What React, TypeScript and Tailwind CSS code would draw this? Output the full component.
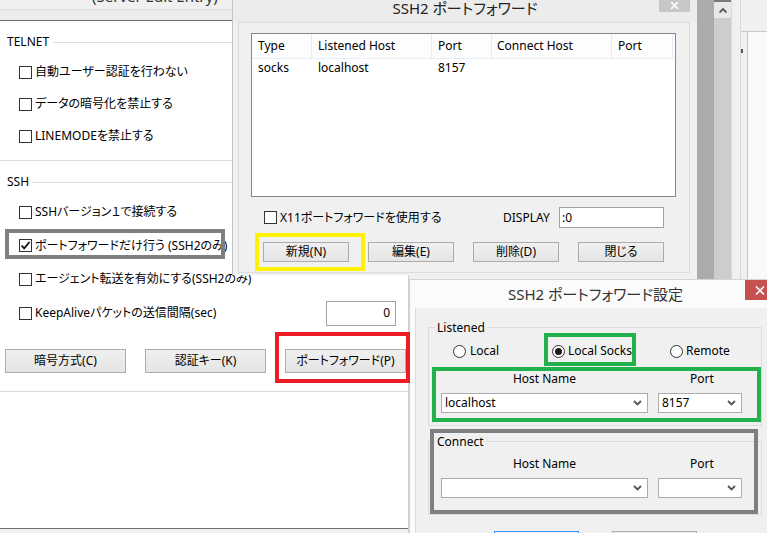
import React from 'react';

const FONT = "[font-family:'Noto_Sans','Noto_Sans_CJK_JP',sans-serif] [font-feature-settings:'palt']";

function CheckBox({ checked = false }: { checked?: boolean }) {
  return (
    <span className="w-[13px] h-[13px] shrink-0 border border-[#333] bg-white flex items-center justify-center">
      {checked && (
        <svg width="11" height="11" viewBox="0 0 11 11">
          <path d="M1.5 5.5 L4.2 8.3 L9.5 2" fill="none" stroke="#111" strokeWidth="1.8" />
        </svg>
      )}
    </span>
  );
}

function Radio({ on = false }: { on?: boolean }) {
  return (
    <span className="w-[13px] h-[13px] shrink-0 rounded-full border border-[#333] bg-white flex items-center justify-center">
      {on && <span className="w-[7px] h-[7px] rounded-full bg-[#1a1a1a]" />}
    </span>
  );
}

function Btn({ label, w, h, blue = false }: { label: string; w: string; h: string; blue?: boolean }) {
  return (
    <div
      className={`${w} ${h} shrink-0 flex items-center justify-center border ${blue ? 'border-[#3399ff]' : 'border-[#acacac]'} bg-[linear-gradient(#f0f0f0,#e5e5e5)]`}
    >
      {label}
    </div>
  );
}

function Combo({ w, value = '' }: { w: string; value?: string }) {
  return (
    <div className={`${w} h-[20px] shrink-0 bg-white border border-[#acacac] flex items-center justify-between pl-[3px] pr-[5px]`}>
      <span>{value}</span>
      <svg width="9" height="6" viewBox="0 0 9 6">
        <path d="M1 1 L4.5 4.5 L8 1" fill="none" stroke="#555" strokeWidth="1.8" />
      </svg>
    </div>
  );
}

function CheckRow({ label, h, checked = false, children }: { label: string; h: string; checked?: boolean; children?: React.ReactNode }) {
  return (
    <div className={`${h} flex items-center pl-[19px]`}>
      <CheckBox checked={checked} />
      <span className="ml-[3px] whitespace-nowrap">{label}</span>
      {children}
    </div>
  );
}

export default function App() {
  return (
    <div className={`relative w-[767px] h-[533px] overflow-hidden bg-[#f0f0f0] text-[12px] leading-none text-black ${FONT}`}>
      {/* background: SSH setup window */}
      <div className="absolute left-0 top-0 w-[409px] h-[533px] flex flex-col bg-white border-r border-[#d0d0d0]">
        <div className="relative h-[21px] shrink-0 bg-[#ececec] border-b border-[#6d6d6d] overflow-hidden">
          <div className="h-[10px] bg-[#f0f0f0] border-b border-[#dcdcdc]" />
          <span className="absolute left-[92px] top-[-14px] text-[15px] leading-[20px] text-[#333] whitespace-nowrap">(Server Edit Entry)</span>
        </div>

        <div className="mt-[13px] h-[16px] flex items-center">
          <span className="pl-[7px] pr-[4px]">TELNET</span>
          <div className="flex-1 h-px bg-[#dcdcdc]" />
        </div>
        <div className="mt-[6px]">
          <CheckRow h="h-[32px]" label="自動ユーザー認証を行わない" />
          <CheckRow h="h-[32px]" label="データの暗号化を禁止する" />
          <CheckRow h="h-[32px]" label="LINEMODEを禁止する" />
        </div>
        <div className="mt-[8px] h-px bg-[#dcdcdc]" />

        <div className="mt-[13px] h-[16px] flex items-center">
          <span className="pl-[7px] pr-[3px]">SSH</span>
          <div className="flex-1 h-px bg-[#dcdcdc]" />
        </div>
        <div className="mt-[5px]">
          <CheckRow h="h-[34px]" label="SSHバージョン１で接続する" />
          <CheckRow h="h-[33px]" checked label="ポートフォワードだけ行う (SSH2のみ)" />
          <CheckRow h="h-[34px]" label="エージェント転送を有効にする(SSH2のみ)" />
          <CheckRow h="h-[34px]" label="KeepAliveパケットの送信間隔(sec)">
            <div className="ml-auto mr-[12px] w-[70px] h-[25px] border border-[#a0a0a0] bg-white flex items-center justify-end pr-[5px]">0</div>
          </CheckRow>
        </div>

        <div className="mt-[19px] flex gap-[19px] pl-[5px]">
          <Btn w="w-[121px]" h="h-[24px]" label="暗号方式(C)" />
          <Btn w="w-[121px]" h="h-[24px]" label="認証キー(K)" />
          <Btn w="w-[121px]" h="h-[24px]" label="ポートフォワード(P)" />
        </div>
        <div className="mt-[18px] h-px bg-[#d9d9d9]" />
        <div className="flex-1" />
        <div className="h-[5px] border-t border-[#6d6d6d] bg-[#f0f0f0]" />
      </div>

      {/* SSH2 port forward window */}
      <div className="absolute left-[232px] top-0 w-[465px] h-[275px] flex flex-col bg-[#f0f0f0] border-l border-[#c4c4c4]">
        <div className="relative h-[22px] shrink-0 bg-[#ececec] flex items-center justify-center">
          <span className="text-[15px] text-[#222] -mt-[6px]">SSH2 ポートフォワード</span>
          <div className="absolute right-[7px] top-0 w-[31px] h-[12px] bg-[#c7c7c7] flex items-center justify-center">
            <svg width="9" height="8" viewBox="0 0 9 8">
              <path d="M1 0 L8 7 M8 0 L1 7" stroke="#fff" strokeWidth="1.6" />
            </svg>
          </div>
        </div>
        <div className="ml-[5px] mr-[7px] h-[251px] border border-[#dcdcdc] bg-[#f0f0f0]">
          <div className="ml-[12px] mt-[10px] w-[425px] h-[164px] border border-[#828790] bg-white">
            <div className="h-[25px] flex border-b border-[#e5eefa] bg-[#fdfdfd]">
              <div className="w-[60px] border-r border-[#e3ecf8] flex items-center pl-[6px]">Type</div>
              <div className="w-[120px] border-r border-[#e3ecf8] flex items-center pl-[6px]">Listened Host</div>
              <div className="w-[60px] border-r border-[#e3ecf8] flex items-center pl-[6px]">Port</div>
              <div className="w-[120px] border-r border-[#e3ecf8] flex items-center pl-[5px]">Connect Host</div>
              <div className="w-[61px] border-r border-[#e3ecf8] flex items-center pl-[6px]">Port</div>
            </div>
            <div className="h-[17px] flex">
              <div className="w-[60px] flex items-center pl-[6px]">socks</div>
              <div className="w-[120px] flex items-center pl-[6px]">localhost</div>
              <div className="w-[60px] flex items-center pl-[6px]">8157</div>
            </div>
          </div>
          <div className="mt-[10px] h-[21px] flex items-center pl-[25px]">
            <div className="w-[239px] flex items-center">
              <CheckBox />
              <span className="ml-[3px] whitespace-nowrap">X11ポートフォワードを使用する</span>
            </div>
            <span className="w-[56px]">DISPLAY</span>
            <div className="w-[105px] h-[21px] border border-[#a0a0a0] bg-white flex items-center pl-[2px]">:0</div>
          </div>
          <div className="mt-[14px] flex gap-[19px] pl-[24px]">
            <Btn w="w-[86px]" h="h-[20px]" label="新規(N)" />
            <Btn w="w-[86px]" h="h-[20px]" label="編集(E)" />
            <Btn w="w-[86px]" h="h-[20px]" label="削除(D)" />
            <Btn w="w-[86px]" h="h-[20px]" label="閉じる" />
          </div>
        </div>
      </div>

      {/* right-hand strip of other windows */}
      <div className="absolute left-[697px] top-0 w-[70px] h-[279px] flex">
        <div className="w-[17px] bg-[#ababab]" />
        <div className="w-[17px] flex flex-col bg-[#cdcdcd]">
          <div className="h-[18px] bg-[#e8e8e8] border-t-2 border-[#7a7a7a] flex items-center justify-center">
            <svg width="8" height="5" viewBox="0 0 8 5">
              <path d="M0.5 4.5 L4 1 L7.5 4.5" fill="none" stroke="#555" strokeWidth="1.8" />
            </svg>
          </div>
        </div>
        <div className="w-[10px] bg-[#f0f0f0] border-x border-[#d9d9d9]" />
        <div className="w-[26px] flex flex-col bg-[#f0f0f0]">
          <div className="h-[32px] border-b border-[#c8c8c8]" />
          <div className="flex-1 flex">
            <div className="w-[6px] relative">
              <div className="absolute left-0 top-[17px] w-[2px] h-[4px] bg-[#555]" />
            </div>
            <div className="flex-1 border-l border-[#c4c4c4] bg-[#f8faf8]" />
          </div>
        </div>
      </div>

      {/* SSH2 port forward settings dialog */}
      <div className="absolute left-[409px] top-[279px] w-[372px] h-[260px] flex flex-col bg-[#fbfbfb] border-l border-t border-[#d4d4d4]">
        <div className="relative h-[28px] shrink-0 flex items-center justify-center">
          <span className="text-[15px] text-[#333]">SSH2 ポートフォワード設定</span>
          <div className="absolute left-[335px] top-0 w-[30px] h-[20px] bg-[#c75050] flex items-center justify-center">
            <svg width="10" height="9" viewBox="0 0 10 9">
              <path d="M1 0.5 L9 8.5 M9 0.5 L1 8.5" stroke="#fff" strokeWidth="1.6" />
            </svg>
          </div>
        </div>
        <div className="ml-[5px] flex-1 border-l border-[#dcdcdc] bg-[#f0f0f0]">
          <div className="relative ml-[12px] mt-[19px] w-[334px] h-[99px] border border-[#dcdcdc]">
            <span className="absolute left-[6px] top-[-8px] px-[2px] bg-[#f0f0f0] leading-[16px]">Listened</span>
            <div className="mt-[15px] h-[16px] flex items-center pl-[24px]">
              <div className="w-[99px] flex items-center">
                <Radio />
                <span className="ml-[4px]">Local</span>
              </div>
              <div className="w-[118px] flex items-center">
                <Radio on />
                <span className="ml-[3px] whitespace-nowrap">Local Socks</span>
              </div>
              <div className="flex items-center">
                <Radio />
                <span className="ml-[3px]">Remote</span>
              </div>
            </div>
            <div className="mt-[12px] h-[16px] flex items-center pl-[12px] gap-[10px]">
              <span className="w-[207px] text-center">Host Name</span>
              <span className="w-[88px] text-center">Port</span>
            </div>
            <div className="mt-[6px] flex pl-[12px] gap-[10px]">
              <Combo w="w-[207px]" value="localhost" />
              <Combo w="w-[84px]" value="8157" />
            </div>
          </div>

          <div className="relative ml-[12px] mt-[15px] w-[334px] h-[74px] border border-[#dcdcdc]">
            <span className="absolute left-[6px] top-[-8px] px-[2px] bg-[#f0f0f0] leading-[16px]">Connect</span>
            <div className="mt-[14px] h-[16px] flex items-center pl-[12px] gap-[10px]">
              <span className="w-[207px] text-center">Host Name</span>
              <span className="w-[88px] text-center">Port</span>
            </div>
            <div className="mt-[6px] flex pl-[12px] gap-[10px]">
              <Combo w="w-[207px]" />
              <Combo w="w-[84px]" />
            </div>
          </div>

          <div className="mt-[16px] flex gap-[33px] pl-[78px]">
            <Btn w="w-[85px]" h="h-[23px]" label="OK" blue />
            <Btn w="w-[85px]" h="h-[23px]" label="キャンセル" />
          </div>
        </div>
      </div>

      {/* annotation frames */}
      <div className="absolute left-[5px] top-[229px] w-[220px] h-[30px] border-4 border-[#7f7f7f] pointer-events-none" />
      <div className="absolute left-[275px] top-[332px] w-[135px] h-[51px] border-4 border-[#ed1c24] pointer-events-none" />
      <div className="absolute left-[255px] top-[233px] w-[110px] h-[38px] border-4 border-[#fff200] pointer-events-none" />
      <div className="absolute left-[544px] top-[333px] w-[92px] h-[33px] border-4 border-[#22b14c] pointer-events-none" />
      <div className="absolute left-[432px] top-[367px] w-[329px] h-[55px] border-4 border-[#22b14c] pointer-events-none" />
      <div className="absolute left-[430px] top-[429px] w-[328px] h-[85px] border-4 border-[#7f7f7f] pointer-events-none" />
    </div>
  );
}
